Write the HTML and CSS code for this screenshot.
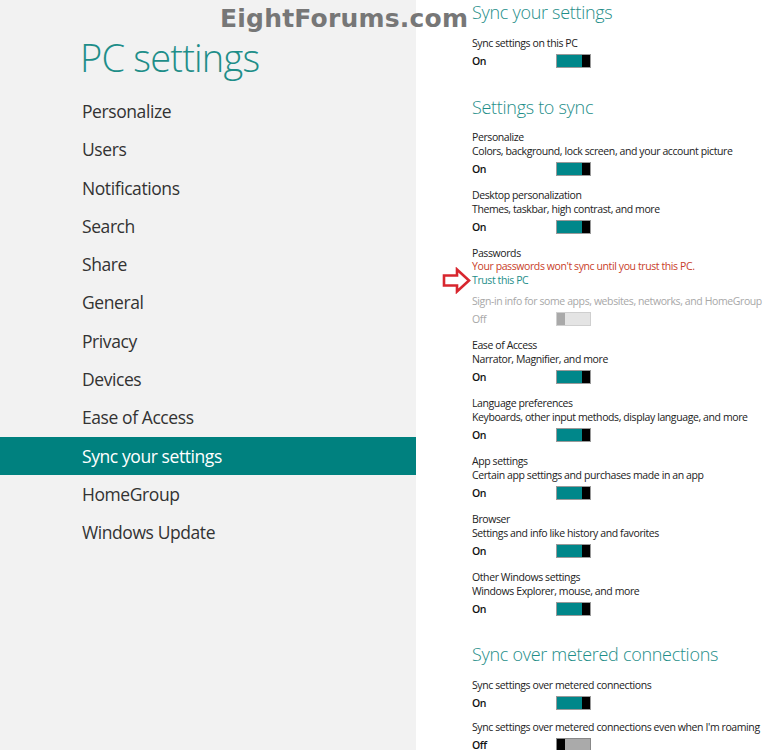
FILE: index.html
```html
<!DOCTYPE html>
<html>
<head>
<meta charset="utf-8">
<link rel="stylesheet" href="styles.css">
</head>
<body>
<div class="screen">
  <aside class="left">
    <h1 class="title">PC settings</h1>
    <nav class="nav">
      <div class="nav-item">Personalize</div>
      <div class="nav-item">Users</div>
      <div class="nav-item">Notifications</div>
      <div class="nav-item">Search</div>
      <div class="nav-item">Share</div>
      <div class="nav-item">General</div>
      <div class="nav-item">Privacy</div>
      <div class="nav-item">Devices</div>
      <div class="nav-item">Ease of Access</div>
      <div class="nav-item active">Sync your settings</div>
      <div class="nav-item">HomeGroup</div>
      <div class="nav-item">Windows Update</div>
    </nav>
  </aside>
  <main class="right">
    <h2 class="heading first">Sync your settings</h2>
    <div class="item">
      <div class="label">Sync settings on this PC</div>
      <div class="row"><span class="state">On</span><span class="toggle on"></span></div>
    </div>

    <h2 class="heading">Settings to sync</h2>
    <div class="item">
      <div class="label">Personalize</div>
      <div class="desc">Colors, background, lock screen, and your account picture</div>
      <div class="row"><span class="state">On</span><span class="toggle on"></span></div>
    </div>
    <div class="item">
      <div class="label">Desktop personalization</div>
      <div class="desc">Themes, taskbar, high contrast, and more</div>
      <div class="row"><span class="state">On</span><span class="toggle on"></span></div>
    </div>
    <div class="item">
      <div class="label">Passwords</div>
      <div class="warn">Your passwords won't sync until you trust this PC.</div>
      <div class="link-wrap">
        <svg class="arrow" width="29" height="27" viewBox="0 0 29 27"><polygon points="2,8.5 15,8.5 15,2.5 27,13.5 15,24.5 15,18.5 2,18.5" fill="#fff" stroke="#d8262e" stroke-width="2.6" stroke-linejoin="miter"/></svg>
        <a class="link">Trust this PC</a>
      </div>
      <div class="desc disabled sign">Sign-in info for some apps, websites, networks, and HomeGroup</div>
      <div class="row"><span class="state disabled">Off</span><span class="toggle dis"></span></div>
    </div>
    <div class="item">
      <div class="label">Ease of Access</div>
      <div class="desc">Narrator, Magnifier, and more</div>
      <div class="row"><span class="state">On</span><span class="toggle on"></span></div>
    </div>
    <div class="item">
      <div class="label">Language preferences</div>
      <div class="desc">Keyboards, other input methods, display language, and more</div>
      <div class="row"><span class="state">On</span><span class="toggle on"></span></div>
    </div>
    <div class="item">
      <div class="label">App settings</div>
      <div class="desc">Certain app settings and purchases made in an app</div>
      <div class="row"><span class="state">On</span><span class="toggle on"></span></div>
    </div>
    <div class="item">
      <div class="label">Browser</div>
      <div class="desc">Settings and info like history and favorites</div>
      <div class="row"><span class="state">On</span><span class="toggle on"></span></div>
    </div>
    <div class="item">
      <div class="label">Other Windows settings</div>
      <div class="desc">Windows Explorer, mouse, and more</div>
      <div class="row"><span class="state">On</span><span class="toggle on"></span></div>
    </div>

    <h2 class="heading last">Sync over metered connections</h2>
    <div class="item tight">
      <div class="label">Sync settings over metered connections</div>
      <div class="row"><span class="state">On</span><span class="toggle on"></span></div>
    </div>
    <div class="item">
      <div class="label">Sync settings over metered connections even when I'm roaming</div>
      <div class="row"><span class="state">Off</span><span class="toggle off"></span></div>
    </div>
  </main>
  <div class="logo">EightForums.com</div>
</div>
</body>
</html>
```
FILE: styles.css
```css
html, body {
  margin: 0;
  padding: 0;
  background: #ffffff;
  overflow: hidden;
}
.screen {
  position: relative;
  display: flex;
  width: 781px;
  height: 750px;
  overflow: hidden;
  font-family: "Open Sans", "Noto Sans", sans-serif;
}
.left {
  width: 416px;
  flex: none;
  background: #f2f2f2;
  padding-top: 30px;
  box-sizing: border-box;
}
.title {
  margin: 0 0 0 80px;
  font-weight: 300;
  font-size: 38px;
  letter-spacing: -0.8px;
  line-height: 54px;
  color: #1e8e89;
}
.nav {
  margin-top: 8px;
  display: flex;
  flex-direction: column;
}
.nav-item {
  height: 38.3px;
  line-height: 38px;
  padding-left: 82px;
  font-size: 17.5px;
  letter-spacing: -0.42px;
  font-weight: 400;
  color: #333;
}
.nav-item.active {
  background: #00817f;
  color: #fff;
}
.right {
  flex: 1;
  padding-left: 56px;
  color: #222;
  font-size: 10.5px;
  letter-spacing: -0.4px;
}
.heading {
  margin: 23px 0 10px 0;
  font-weight: 300;
  font-size: 18px;
  letter-spacing: -0.3px;
  line-height: 26px;
  color: #1e8e89;
}
.heading.first {
  margin-top: -1px;
  margin-bottom: 11px;
}
.heading.last {
  margin-top: 22px;
  margin-bottom: 11px;
}
.item {
  margin-bottom: 9px;
}
.item.tight { margin-bottom: 7px; }
.label, .desc, .warn, .link-wrap {
  line-height: 14px;
  white-space: nowrap;
}
.warn { color: #c8402a; line-height: 13px; }
.link-wrap {
  position: relative;
}
.link { color: #1e8e89; }
.arrow {
  position: absolute;
  left: -30px;
  top: -6px;
}
.sign { margin-top: 7px; }
.disabled { color: #a8a8a8; }
.row {
  display: flex;
  align-items: center;
  height: 20px;
  margin-top: 1px;
}
.state {
  width: 84px;
  font-weight: 600;
  color: #111;
}
.state.disabled { font-weight: 400; color: #a8a8a8; }
.toggle {
  box-sizing: border-box;
  width: 35px;
  height: 14px;
  border: 1px solid #9a9a9a;
}
.toggle.on {
  background: linear-gradient(to right, #00878a 0, #00878a calc(100% - 8px), #000 calc(100% - 8px));
}
.toggle.off {
  border-color: #888;
  background: linear-gradient(to right, #000 0, #000 8px, #aaaaaa 8px);
}
.toggle.dis {
  border-color: #cfcfcf;
  background: linear-gradient(to right, #a9a9a9 0, #a9a9a9 8px, #e4e4e4 8px);
}
.logo {
  position: absolute;
  left: 220px;
  top: 2px;
  font-family: "DejaVu Sans", sans-serif;
  font-weight: bold;
  font-size: 25px;
  line-height: 34px;
  color: #777;
  letter-spacing: 0.2px;
}
```
